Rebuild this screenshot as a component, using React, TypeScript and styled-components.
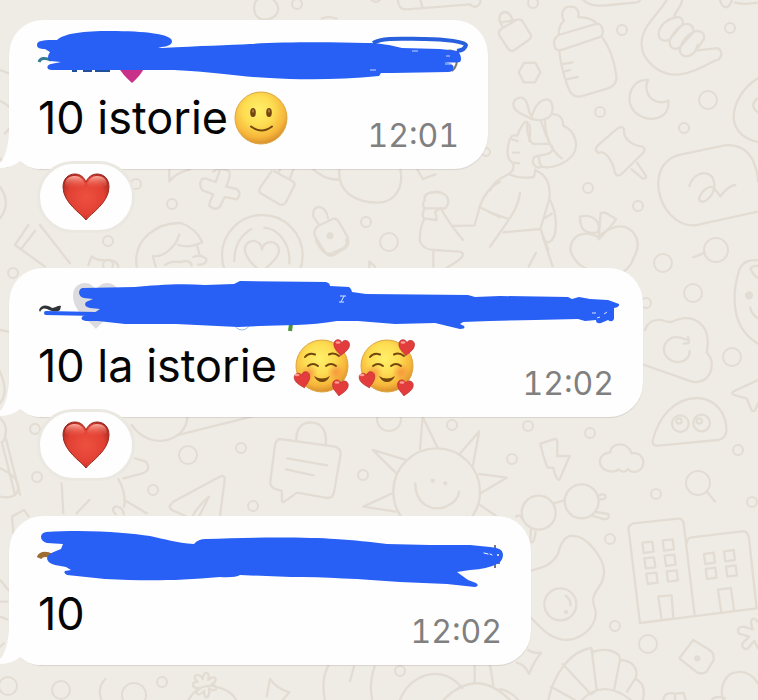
import React from "react";
import styled, { createGlobalStyle } from "styled-components";

const GlobalStyle = createGlobalStyle`
  * { box-sizing: border-box; }
  body { margin: 0; background: #efece6; font-family: Inter, "Liberation Sans", sans-serif; }
`;

const Chat = styled.main`
  position: relative;
  isolation: isolate;
  min-height: 100vh;
  overflow: hidden;
  padding: 20px 9px 35px;
  display: flex;
  flex-direction: column;
  align-items: flex-start;
  gap: 35px;
`;

const WallpaperSvg = styled.svg`
  position: absolute;
  inset: 0;
  z-index: -1;
  width: 100%;
  height: 100%;
  fill: none;
  stroke: #e3dcd3;
  stroke-width: 7;
  stroke-linecap: round;
  stroke-linejoin: round;
`;

const Message = styled.article`
  display: flex;
  flex-direction: column;
  align-items: flex-start;
  max-width: 100%;
`;

const Bubble = styled.div`
  position: relative;
  padding: 10px 29px 19px;
  background: #fefefe;
  border-radius: 34px;
  box-shadow: 0 1px 1px rgba(70, 60, 40, 0.14);
`;

const Tail = styled.svg`
  position: absolute;
  left: -9px;
  bottom: 0;
  width: 40px;
  height: 50px;
`;

const Sender = styled.svg`
  position: relative;
  display: block;
  height: 60px;
  overflow: visible;
  fill: #285ff4;
`;

const Line = styled.div`
  position: relative;
  display: flex;
  align-items: flex-start;
  justify-content: space-between;
  height: 60px;
`;

const Body = styled.p<{ $gap: number }>`
  display: flex;
  align-items: center;
  gap: ${(p) => p.$gap}px;
  margin: 0;
  height: 56px;
  font-size: 45px;
  line-height: 56px;
  color: #050505;
  white-space: nowrap;
`;

const Time = styled.time`
  align-self: flex-end;
  font-size: 32px;
  line-height: 28px;
  font-variant-numeric: tabular-nums;
  color: #808080;
`;

const Reaction = styled.button`
  position: relative;
  display: grid;
  place-items: center;
  width: 98px;
  height: 72px;
  margin: -8px 0 0 28px;
  padding: 0;
  border: 3px solid #ebe7e1;
  border-radius: 36px;
  background: #fefefe;
`;

const Faces = styled.span`
  display: flex;
  gap: 5px;
`;

const FaceSvg = styled.svg`
  display: block;
  width: 60px;
  height: 60px;
  flex: none;
`;

const SmileSvg = styled(FaceSvg)`
  width: 54px;
  height: 54px;
`;

const HeartSvg = styled.svg`
  display: block;
  width: 48px;
  height: 48px;
`;

const heartPath =
  "M24 47 C20 41 1 30 1 14 C1 6 6 1 13 1 C18 1 22 4 24 9 C26 4 30 1 35 1 C42 1 47 6 47 14 C47 30 28 41 24 47Z";

function Heart() {
  return (
    <HeartSvg viewBox="0 0 48 48" role="img" aria-label="Red heart">
      <defs>
        <radialGradient id="heart" cx=".5" cy=".5" r=".6">
          <stop offset="0" stopColor="#ee5140" />
          <stop offset=".65" stopColor="#e14032" />
          <stop offset="1" stopColor="#a52720" />
        </radialGradient>
        <linearGradient id="heartShine" x1="0" y1="0" x2="0" y2="1">
          <stop offset="0" stopColor="#ffb5a8" stopOpacity=".95" />
          <stop offset="1" stopColor="#ee5544" stopOpacity="0" />
        </linearGradient>
      </defs>
      <path d={heartPath} fill="url(#heart)" stroke="#9d2a22" strokeWidth="1" />
      <path d="M3 12 C3 5 8 3 13 3 C18 3 21 6 23 11 C18 17 5 17 3 12Z" fill="url(#heartShine)" />
      <path d="M25 11 C27 6 30 3 35 3 C41 3 45 6 45 12 C42 17 29 17 25 11Z" fill="url(#heartShine)" />
    </HeartSvg>
  );
}

function FaceFill({ id }: { id: string }) {
  return (
    <defs>
      <radialGradient id={id} cx=".45" cy=".36" r=".64">
        <stop offset="0" stopColor="#fff06a" />
        <stop offset=".45" stopColor="#fddd52" />
        <stop offset=".8" stopColor="#f6b63a" />
        <stop offset="1" stopColor="#d98f2e" />
      </radialGradient>
      <radialGradient id={id + "Blush"}>
        <stop offset="0" stopColor="#f58a3c" stopOpacity=".75" />
        <stop offset="1" stopColor="#f58a3c" stopOpacity="0" />
      </radialGradient>
    </defs>
  );
}

function Smile() {
  return (
    <SmileSvg viewBox="0 0 54 54" role="img" aria-label="Slightly smiling face">
      <FaceFill id="smile" />
      <circle cx="27" cy="27" r="26" fill="url(#smile)" stroke="#dca743" />
      <g fill="#74460f">
        <ellipse cx="19" cy="21.5" rx="2.8" ry="4.5" />
        <ellipse cx="35" cy="21.5" rx="2.8" ry="4.5" />
      </g>
      <ellipse cx="19" cy="20" rx="1.2" ry="1.8" fill="#a8783a" />
      <ellipse cx="35" cy="20" rx="1.2" ry="1.8" fill="#a8783a" />
      <path d="M17 35.500 Q27.500 43.500 38 35.500" fill="none" stroke="#74460f" strokeWidth="2" strokeLinecap="round" />
    </SmileSvg>
  );
}

function LoveFace({ id }: { id: string }) {
  return (
    <FaceSvg viewBox="0 0 60 60" role="img" aria-label="Smiling face with hearts">
      <FaceFill id={id} />
      <circle cx="31" cy="30" r="26" fill={`url(#${id})`} stroke="#dca743" />
      <circle cx="18" cy="37" r="9" fill={`url(#${id}Blush)`} />
      <circle cx="45" cy="36" r="9" fill={`url(#${id}Blush)`} />
      <g fill="none" stroke="#74460f" strokeWidth="2" strokeLinecap="round">
        <path d="M14 21 Q18 16 24 18.500" />
        <path d="M38 18.500 Q43 16 48 20" />
        <path d="M17 30 Q22 26 27 30" />
        <path d="M35 30 Q40 26 45 30" />
      </g>
      <path d="M23 40 Q31 45 39 40 Q36 46 31 46 Q26 46 23 40Z" fill="#74460f" />
      <g fill="#e33c3c" stroke="#b92d30" strokeWidth="2">
        <path d={heartPath} transform="translate(43 3) rotate(5) scale(.34)" />
        <path d={heartPath} transform="translate(2 38) rotate(-12) scale(.34)" />
        <path d={heartPath} transform="translate(42 43) rotate(8) scale(.34)" />
      </g>
      <g fill="#ff9b91">
        <ellipse cx="47" cy="6.500" rx="2.500" ry="1.300" />
        <ellipse cx="6" cy="39" rx="2.500" ry="1.300" />
        <ellipse cx="46" cy="46.500" rx="2.500" ry="1.300" />
      </g>
    </FaceSvg>
  );
}

function SenderOne() {
  return (
    <Sender width="421" viewBox="38 30 421 60" role="img" aria-label="Hidden sender">
      <path d="M119 68 H144 Q142 74 132 83 Q122 74 119 68Z" fill="#c9308a" />
      <path d="M72 71 H77 M83 71 H92 M95 71 H110" stroke="#22519c" strokeWidth="2" />
      <path d="M39 62 Q41 56 51 60" fill="none" stroke="#347d94" strokeWidth="3" />
      <path d="M447 51 Q454 49 457 56 Q458 66 452 71" fill="none" stroke="#777" strokeWidth="2" />
      <path d="M37 45 C37 40 45 40 57 40 C65 33 84 31 110 31 C145 31 171 34 172 41 C172 45 167 47 158 47 L162 48 C200 46 230 45 250 44 C280 42 330 42 365 43 C380 43 390 45 402 48 L440 49 L458 51 Q463 58 460 62 Q454 63 444 62 Q456 64 453 69 Q453 72 448 72 L392 73 L381 73 L379 76 C340 80 300 80 270 78 C240 77 215 72 174 70 L52 70 C46 70 46 65 51 64 L61 62 L50 61 Q46 58 50 52 L45 49 C40 49 37 48 37 45Z" />
      <path d="M373 43 C383 37 405 39 425 39 C445 39 466 42 466 45 Q465 50 457 51" fill="none" stroke="#285fdd" strokeWidth="4" />
      <path d="M412 51 H418 M370 70 H376 M445 64 H452 M446 56 H450" stroke="#c4d6ff" strokeWidth="1" />
    </Sender>
  );
}

function SenderTwo() {
  return (
    <Sender width="576" viewBox="38 278 576 60" role="img" aria-label="Hidden sender">
      <path d={heartPath} transform="translate(72 282)" fill="#dcdbdf" />
      <path d="M39 310 C42 303 49 306 52 308 C56 308 58 305 61 306 L60 310 C56 313 51 311 47 309 Q42 307 40 312Z" fill="#303438" />
      <circle cx="242" cy="322" r="8" fill="none" stroke="#9eb9df" />
      <path d="M291 324 L290 331" stroke="#4c9638" strokeWidth="4" />
      <path d="M46 313 L96 314" stroke="#285ff4" strokeWidth="4" strokeLinecap="round" />
      <path d="M83 288 L135 287 C155 285 180 283 205 285 L234 284 L240 281 L326 282 Q330 283 330 286 L349 287 Q352 289 352 292 L366 294 L468 295 L475 297 L500 296 L568 297 L572 299 L579 297 L590 299 L608 300 L619 304 Q620 307 614 308 L614 319 Q612 323 608 320 L601 323 Q596 324 596 320 L585 321 L578 319 L535 320 L490 321 L463 322 L460 324 L464 326 Q466 329 460 329 L435 323 L395 324 L358 321 L337 321 C310 326 280 325 260 326 L238 327 L176 324 L125 324 L98 321 L86 321 Q79 320 83 316 L94 313 L100 309 L90 308 Q83 306 86 302 L93 299 L84 298 Q79 297 79 292 Q80 288 83 288Z" />
      <path d="M340 296 L346 296 M344 296 L341 302 M339 302 H344 M592 313 H596 M604 314 L607 312 M597 318 L600 317" stroke="#d9e6ff" strokeWidth="1" />
    </Sender>
  );
}

function SenderThree() {
  return (
    <Sender width="464" viewBox="38 526 464 60" role="img" aria-label="Hidden sender">
      <path d="M39 558 Q42 552 52 556" fill="none" stroke="#9c6c33" strokeWidth="5" />
      <path d="M495 545 V568 M492 563 H500" stroke="#777" strokeWidth="2" />
      <path d="M46 532 C90 529 130 533 150 536 C165 539 176 543 194 544 Q198 539 206 539 C250 537 310 537 335 539 C355 540 370 542 387 544 L430 545 L470 545 L490 547 Q503 548 503 554 Q503 560 499 563 Q488 569 470 570 L457 572 L468 580 L476 583 Q480 586 475 587 L447 584 L400 582 C360 579 325 577 291 577 L240 575 Q235 578 220 577 C175 581 145 581 105 579 L67 575 Q63 573 65 571 L71 570 L66 567 L55 565 Q47 563 47 558 Q48 554 56 551 L61 549 L63 544 L47 543 Q41 541 41 537 Q41 533 46 532Z" />
      <path d="M484 553 L488 554 M490 554 L492 555" stroke="#fff" strokeWidth="1" strokeLinecap="round" />
      <circle cx="498" cy="555" r="1" fill="#fff" />
    </Sender>
  );
}

const dots: Array<[number, number, number]> = [
  [297, 4, 5], [533, 3, 5], [622, 30, 5], [730, 28, 5], [708, 100, 9], [600, 112, 5],
  [684, 128, 5], [588, 188, 5], [638, 206, 5], [663, 263, 9], [693, 293, 9], [646, 303, 5],
  [732, 357, 9], [512, 459, 5], [528, 426, 5], [590, 433, 5], [738, 450, 5], [656, 494, 5],
  [752, 502, 5], [610, 539, 5], [615, 626, 5], [648, 644, 9], [172, 204, 5], [366, 222, 5],
  [389, 242, 9], [108, 241, 5], [136, 184, 5], [108, 265, 5], [13, 273, 5], [188, 455, 9],
  [241, 448, 5], [153, 490, 5], [253, 506, 5], [363, 475, 5], [452, 425, 5], [389, 419, 12],
  [35, 429, 5], [37, 477, 5], [8, 686, 9], [61, 690, 9], [134, 695, 12], [162, 682, 5],
  [400, 671, 5], [716, 250, 12], [698, 483, 12], [486, 152, 4],
];

function Wallpaper() {
  return (
    <WallpaperSvg aria-hidden="true">
      <g strokeWidth="2">
        {dots.map(([x, y, r]) => (
          <circle key={`${x}-${y}`} cx={x} cy={y} r={r} />
        ))}
      </g>
      <g transform="translate(490 0) scale(.3333)">
        <path d="M35 67 L83 59 Q94 56 99 66 L122 104 Q126 114 116 120 L72 151 Q62 157 55 147 L28 106 Q23 93 36 85 L76 62 M38 82 L28 60 Q27 36 48 36 Q61 38 69 64" />
        <path d="M102 189 L136 188 L151 217 L135 247 L101 247 L86 217Z" />
        <path d="M206 105 Q205 77 222 62 C211 45 218 20 240 20 C261 19 269 34 265 52 Q302 50 321 71 L206 105 Q185 119 195 143 Q200 155 220 148 L325 113 Q345 107 336 83 Q332 70 319 71 M208 151 C210 190 231 264 244 280 Q255 294 278 288 L354 265 Q383 254 379 226 C374 190 360 144 337 112 M219 192 L247 187 M225 214 L240 210 M230 238 L263 231" />
        <path d="M280 0 C300 20 330 18 360 15 L440 7 Q455 4 448 -8 M530 0 C510 37 458 75 455 126 C451 180 510 230 570 223 C625 216 657 186 685 179 C701 166 694 142 675 145 L623 151 M577 0 C570 30 552 38 552 53 M552 54 C580 43 586 71 568 84 L540 118 C513 132 499 109 510 86 Q525 59 552 54 M576 76 C603 62 622 89 602 106 L568 143 C544 155 532 131 544 111 Q560 85 576 76 M601 101 C630 81 654 105 637 124 L618 151 C596 180 567 170 570 147 Q578 117 601 101 M623 135 L617 151 M690 0 C698 29 716 29 726 0 M735 8 Q765 15 804 8" />
        <path d="M475 240 C430 237 414 278 420 310 C430 350 485 370 520 345 Q537 331 536 302 C506 315 476 300 470 270 Q467 250 475 240Z" />
        <path d="M390 382 Q404 380 402 392 C400 416 429 439 455 439 Q470 447 459 459 L398 519 Q383 535 375 519 C369 488 349 449 325 459 Q312 450 322 438 L377 390 Q383 383 390 382Z M425 508 L458 536 Q472 535 467 526 L441 488" />
        <path d="M804 235 C760 260 730 310 731 355 Q737 411 804 426 M804 295 Q775 315 804 337 M575 463 L690 439 C739 426 776 450 791 486 Q804 519 804 544 M804 635 L622 675 C559 684 515 625 506 570 C499 507 529 471 575 463 M598 558 C613 510 667 508 672 547 C679 583 638 622 627 598 C633 570 665 550 674 567 L691 589 Q715 557 736 555" />
        <path d="M123 356 C101 343 67 335 70 310 Q75 291 96 293 C119 300 110 336 126 350 C133 319 150 300 167 299 C192 294 195 344 173 354 Q150 366 123 356 M105 365 Q91 381 82 407 Q64 403 61 417 L82 423 M59 419 Q43 469 66 487 L88 490 M70 458 H87 M70 493 Q74 509 57 522 C28 535 5 554 0 571 M57 522 Q89 538 132 531 L136 509 M112 366 C109 390 117 429 132 432 L176 431 Q191 438 187 451 C177 469 147 462 132 472 C121 493 140 507 153 501 M153 362 C168 410 184 453 215 475 M165 363 Q165 410 190 450 M190 343 C211 342 222 362 219 377 C256 392 268 436 249 464 C230 489 188 508 155 500 Q145 488 148 469 M118 373 Q123 400 118 423 M137 512 C169 522 185 558 177 600 L151 687 L40 697 M90 579 C83 630 57 658 0 740 M0 638 L56 657 M180 600 C201 640 207 711 177 727 Q162 731 154 691 M163 655 L185 641 M151 687 L175 750" />
        <path d="M241 750 C242 708 278 688 323 710 C362 682 402 661 433 702 Q455 735 430 775 C415 830 335 847 285 804 Q253 789 241 750 M270 650 Q303 641 322 665 Q331 682 322 697 Q269 708 270 650 M326 718 L332 639 L347 638 L378 657 Q377 665 326 718" />
      </g>
      <g transform="translate(240 0) scale(.3333)">
        <path d="M57 -5 C35 5 35 60 75 59 C118 55 124 22 101 0 M473 -5 Q474 30 501 28 L690 13 C706 29 726 14 720 -5 M540 -4 L547 20 M395 0 Q408 11 420 0 M245 56 Q266 47 290 56" />
        <path d="M65 556 L94 515 M102 514 L157 543 Q168 549 161 561 L137 608 Q129 619 115 611 L60 578 Q54 571 65 556 M120 509 L114 519 M160 508 L150 534 M218 507 Q258 543 298 538 M298 508 C292 580 350 608 416 608 C470 605 491 557 481 508 M532 509 L549 537 L586 523 M718 622 C730 587 750 560 780 545 M720 622 L780 652 M718 625 L704 676 L635 678 M554 601 C550 581 571 573 594 578 C625 578 632 605 617 625 L554 625 Q544 614 554 601 M575 579 Q596 569 612 583 M552 628 Q544 655 553 655 L590 660 Q590 646 585 636 L602 624 Q628 672 669 720 M554 656 Q539 680 540 720 M238 676 L220 650 Q217 620 239 621 Q260 627 264 655 M238 676 L278 657 Q290 654 298 668 L320 706 Q332 731 316 744 L285 763 Q268 773 257 760 L226 711 Q216 691 238 676" />
        <circle cx="270" cy="707" r="7" fill="#e3dcd3" />
      </g>
      <g transform="translate(110 165) scale(.3333)">
        <circle cx="457" cy="271" r="121" />
        <path d="M310 20 Q325 4 356 18 Q365 24 349 65 L380 72 Q397 85 381 103 L344 96 L330 125 Q316 139 298 123 Q297 114 310 88 L278 76 Q264 61 276 42 L286 40 L317 51 L330 15 M178 15 L178 50 Q199 22 240 14 M80 305 C68 220 145 172 213 174 Q258 190 277 231 Q240 251 205 240 M208 208 C197 247 160 278 128 273 L137 305 M262 244 L268 267 M250 276 Q270 267 288 280 Q294 299 264 299 M165 300 Q183 287 207 291 L228 288 Q244 290 245 302 M373 288 Q373 222 424 192 M463 188 C513 192 542 247 538 295 M456 320 C410 290 393 252 413 234 C435 218 455 236 456 254 C459 234 482 223 501 239 C520 262 493 289 456 320 M778 315 V290 L795 305" />
      </g>
      <g transform="translate(490 240) scale(.3333)">
        <path d="M610 52 L645 38 M160 -5 L188 79 M138 38 L116 80 M804 61 Q759 57 747 92 C729 151 716 260 804 311 M782 84 Q788 105 804 114 M804 78 Q785 76 782 88 M781 203 Q786 225 804 235 M465 270 Q475 236 515 240 Q533 247 544 246 C590 223 628 235 647 271 Q658 302 650 337 C677 365 667 420 625 425 Q616 429 595 421 L455 372 M598 302 L572 293 C540 285 515 310 524 341 C543 380 600 371 599 333 M581 311 L597 309 L594 290" />
        <path d="M804 420 L731 454 Q720 463 737 466 L770 475 L785 511 Q795 521 804 490 M488 602 C505 535 550 473 625 474 C681 477 712 528 709 575 Q706 597 684 600 L505 617 Q486 618 488 602Z M151 611 L195 597 Q202 597 202 608 L202 648 L239 648 L208 720 Q198 720 190 684 L172 682 Q159 650 151 611Z M342 688 C322 671 326 641 361 637 C362 608 412 602 425 640 C453 636 466 660 457 680 C447 702 420 698 414 687 Q402 702 386 688 Q374 702 342 688Z M651 755 L675 785" />
        <circle cx="571" cy="551" r="25" /><circle cx="635" cy="549" r="25" /><circle cx="567" cy="543" r="8" /><circle cx="628" cy="543" r="8" />
        <circle cx="777" cy="166" r="9" fill="#e3dcd3" />
      </g>
      <g transform="translate(240 240) scale(.3333)">
        <circle cx="590" cy="755" r="130" />
        <path d="M120 597 L285 620 Q303 626 302 643 L282 758 Q277 776 260 774 L171 758 L133 785 Q124 790 126 775 L125 752 Q87 746 91 725 L105 615 Q109 598 120 597 M169 597 C169 563 190 545 216 548 C246 549 262 575 257 613 M142 655 L262 676 M138 688 L221 706 M495 659 L398 630 L467 698 M540 628 L548 530 L592 622 M657 644 L718 574 L699 675 M718 702 L800 713 L722 760 M457 760 L370 800 L467 815 M719 794 L800 850 L680 830 M526 730 C526 796 580 816 620 799 Q655 783 657 755" />
        <path d="M228 0 Q246 42 270 42 L310 24 Q325 16 318 0 M538 0 Q548 30 583 30 L660 35 Q690 44 620 83 M580 35 L580 80" />
        <circle cx="578" cy="722" r="3" fill="#e3dcd3" /><circle cx="616" cy="730" r="3" fill="#e3dcd3" />
      </g>
      <g transform="translate(110 410) scale(.3333)">
        <path d="M65 45 C120 125 230 95 232 20 M200 76 L425 20 M75 145 L108 155 Q125 180 98 190 L40 205 M25 207 Q50 252 42 290 M43 270 L110 310 M17 313 Q0 297 17 289 Q37 290 42 313 M188 276 L329 200 Q345 192 344 210 L330 318 M248 318 Q267 284 297 260 L268 318 M185 281 Q171 294 190 302 L226 318" />
      </g>
      <g transform="translate(0 225) scale(.3333)">
        <path d="M85 0 L45 60 L135 125 M120 0 L210 115 M105 18 L65 70 M265 120 L275 94 Q290 108 325 105 Q354 109 355 126 M0 315 L25 320 M-5 430 Q30 500 0 535 M0 580 Q30 605 10 650 M5 650 L45 809 M15 630 L60 809" />
      </g>
      <g transform="scale(.3333)">
        <path d="M0 210 Q60 230 78 255 M-5 300 Q80 340 15 400 M0 475 L22 500 M0 560 Q35 610 0 655 M182 520 Q190 560 225 575 M0 1490 Q55 1500 55 1460 Q52 1428 0 1405 M36 1550 L72 1530 L86 1550 M36 1550 L40 1600 M185 1450 L190 1540 M230 1540 L268 1500" />
      </g>
      <g transform="translate(500 470) scale(.3333)">
        <circle cx="116" cy="128" r="51" /><circle cx="245" cy="94" r="51" />
        <path d="M160 100 L191 92 M297 76 Q316 68 317 80 Q316 91 298 87 M287 126 L325 132 Q330 148 313 148 L278 138 M48 140 Q60 130 67 148 M93 178 L91 215 Q102 225 107 184 M90 303 C123 292 155 289 175 250 C181 220 198 193 221 198 C260 197 320 271 311 315 C310 355 267 364 283 410 C298 445 272 488 226 505 C160 527 115 465 90 440 M85 540 Q99 550 123 549 Q104 570 87 612 Q75 583 50 578" />
        <circle cx="181" cy="403" r="48" /><path d="M198 378 Q213 389 211 405" strokeWidth="8" /><circle cx="198" cy="426" r="3" />
        <path d="M420 459 L386 180 Q382 166 400 160 L535 146 Q548 145 551 160 L584 437 M420 459 L770 415 L747 204 Q743 181 725 184 L575 202 Q560 204 561 219 M485 450 L475 379 L515 376 L520 444 M664 427 L654 359 L693 354 L702 420" />
        <path d="M427 218 L457 215 L461 245 L431 249Z M488 211 L518 208 L522 238 L492 242Z M433 265 L462 262 L466 292 L437 295Z M494 257 L523 254 L527 284 L498 288Z M439 311 L469 308 L473 338 L443 342Z M500 304 L530 301 L534 331 L504 335Z M612 252 L641 248 L645 278 L616 282Z M672 244 L701 240 L705 270 L676 274Z M617 297 L646 293 L650 323 L621 327Z M678 290 L707 286 L711 316 L682 320Z" />
        <path d="M538 565 L580 510 L630 541 Q643 550 641 570 L620 605 Q606 614 592 608Z M774 455 Q757 435 753 458 L758 478 L732 470 Q707 470 717 491 L748 500 L727 520 Q725 539 743 536 L763 512 L774 535 M670 690 C655 650 680 607 710 607 Q747 599 774 640 M635 690 Q645 675 675 685 M145 690 C160 620 205 545 273 534 Q281 550 280 545 C320 532 362 546 360 570 C400 571 417 600 406 626 Q441 644 428 690 M188 582 L273 673 L290 660 L275 540 M360 570 L343 656 M406 625 L381 665 M152 650 L225 690 M245 690 Q311 625 392 690 M490 690 Q494 664 524 671 L551 669 L557 690 M525 672 V690 M0 657 Q35 665 55 690" />
        <circle cx="592" cy="565" r="6" fill="#e3dcd3" />
      </g>
      <g transform="translate(0 480) scale(.3333)">
        <path d="M0 300 L25 330 M0 365 H22 M0 410 L22 418 M0 500 L12 490 M316 597 Q291 622 304 660 M565 660 Q600 600 665 625 Q699 638 708 660 M604 623 Q585 628 579 617 Q577 605 593 606 Q577 591 590 585 Q602 584 608 597 Q611 574 623 580 Q629 588 624 600 Q642 586 647 597 Q648 607 635 612 Q653 619 648 628 Q637 635 627 625 Q631 648 620 653 Q611 650 613 633 Q598 648 590 641 Q587 635 604 623Z M800 650 L810 597 Q828 625 868 637 L848 660 M985 557 Q962 600 975 660 M1062 560 L1050 603 M1124 560 Q1106 611 1117 660 M1200 660 C1230 580 1330 550 1387 625 M1330 660 Q1430 560 1530 660 M1424 555 V610 M1470 555 L1480 615" />
      </g>
    </WallpaperSvg>
  );
}

function MessageBubble(props: {
  sender: React.ReactNode;
  text: string;
  time: string;
  emoji?: React.ReactNode;
  gap?: number;
  loved?: boolean;
}) {
  return (
    <Message>
      <Bubble>
        <Tail viewBox="0 0 40 50" aria-hidden="true">
          <path d="M9 0 V14 C8 29 5 39 0 44 V49 C8 49 15 46 20 42 C26 47 32 50 40 50 V0Z" fill="#fefefe" />
        </Tail>
        {props.sender}
        <Line>
          <Body $gap={props.gap ?? 0}>
            <span>{props.text}</span>
            {props.emoji}
          </Body>
          <Time dateTime={props.time}>{props.time}</Time>
        </Line>
      </Bubble>
      {props.loved && (
        <Reaction type="button" aria-label="Heart reaction">
          <Heart />
        </Reaction>
      )}
    </Message>
  );
}

export default function App() {
  return (
    <>
      <GlobalStyle />
      <Chat>
        <Wallpaper />
        <MessageBubble sender={<SenderOne />} text="10 istorie" emoji={<Smile />} gap={6} time="12:01" loved />
        <MessageBubble
          sender={<SenderTwo />}
          text="10 la istorie"
          emoji={<Faces><LoveFace id="loveA" /><LoveFace id="loveB" /></Faces>}
          gap={14}
          time="12:02"
          loved
        />
        <MessageBubble sender={<SenderThree />} text="10" time="12:02" />
      </Chat>
    </>
  );
}
